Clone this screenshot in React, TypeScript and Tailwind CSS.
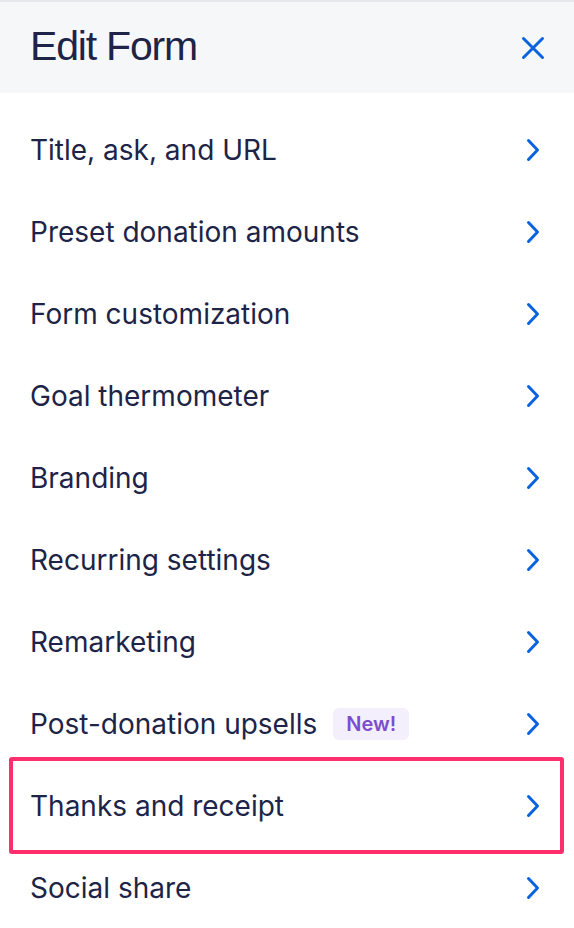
import React from "react";

const items = [
  "Title, ask, and URL",
  "Preset donation amounts",
  "Form customization",
  "Goal thermometer",
  "Branding",
  "Recurring settings",
  "Remarketing",
  "Post-donation upsells",
  "Thanks and receipt",
  "Social share",
];

function Chevron() {
  return (
    <svg width="16" height="24" viewBox="0 0 16 24" fill="none" className="shrink-0">
      <path d="M3.5 2.5 L12.5 12 L3.5 21.5" stroke="#0b62e0" strokeWidth="3" strokeLinecap="round" strokeLinejoin="round" />
    </svg>
  );
}

export default function App() {
  return (
    <div className="w-[574px] h-[928px] overflow-hidden bg-white" style={{ fontFamily: "Inter, 'Noto Sans', sans-serif" }}>
      <div className="border-t-2 border-[#e6e8ee] bg-[#f6f7f9] h-[93px] flex items-center justify-between pl-[30px] pr-[29px]">
        <h1
          className="text-[41px] tracking-[-1.2px] text-[#1d2447] leading-none pb-[2px]"
          style={{ fontFamily: "'Liberation Sans', Arial, sans-serif" }}
        >
          Edit Form
        </h1>
        <svg width="24" height="24" viewBox="0 0 24 24" fill="none">
          <path d="M2.5 2.5 L21.5 21.5 M21.5 2.5 L2.5 21.5" stroke="#0b62e0" strokeWidth="3" strokeLinecap="round" />
        </svg>
      </div>
      <ul className="pt-[16px]">
        {items.map((label) => (
          <li key={label} className="relative h-[82px] flex items-center justify-between pl-[30px] pr-[33px]">
            <div className="flex items-center gap-[16px]">
              <span className="text-[28px] text-[#1d2447]">{label}</span>
              {label === "Post-donation upsells" && (
                <span className="h-[32px] w-[76px] rounded-[6px] bg-[#f4effd] text-[#7c4dcf] text-[20px] font-semibold flex items-center justify-center">
                  New!
                </span>
              )}
            </div>
            <Chevron />
            {label === "Thanks and receipt" && (
              <div className="absolute left-[9px] right-[10px] top-[-8px] bottom-[-7px] border-4 border-[#ff2f6e] rounded-[3px] pointer-events-none" />
            )}
          </li>
        ))}
      </ul>
    </div>
  );
}
